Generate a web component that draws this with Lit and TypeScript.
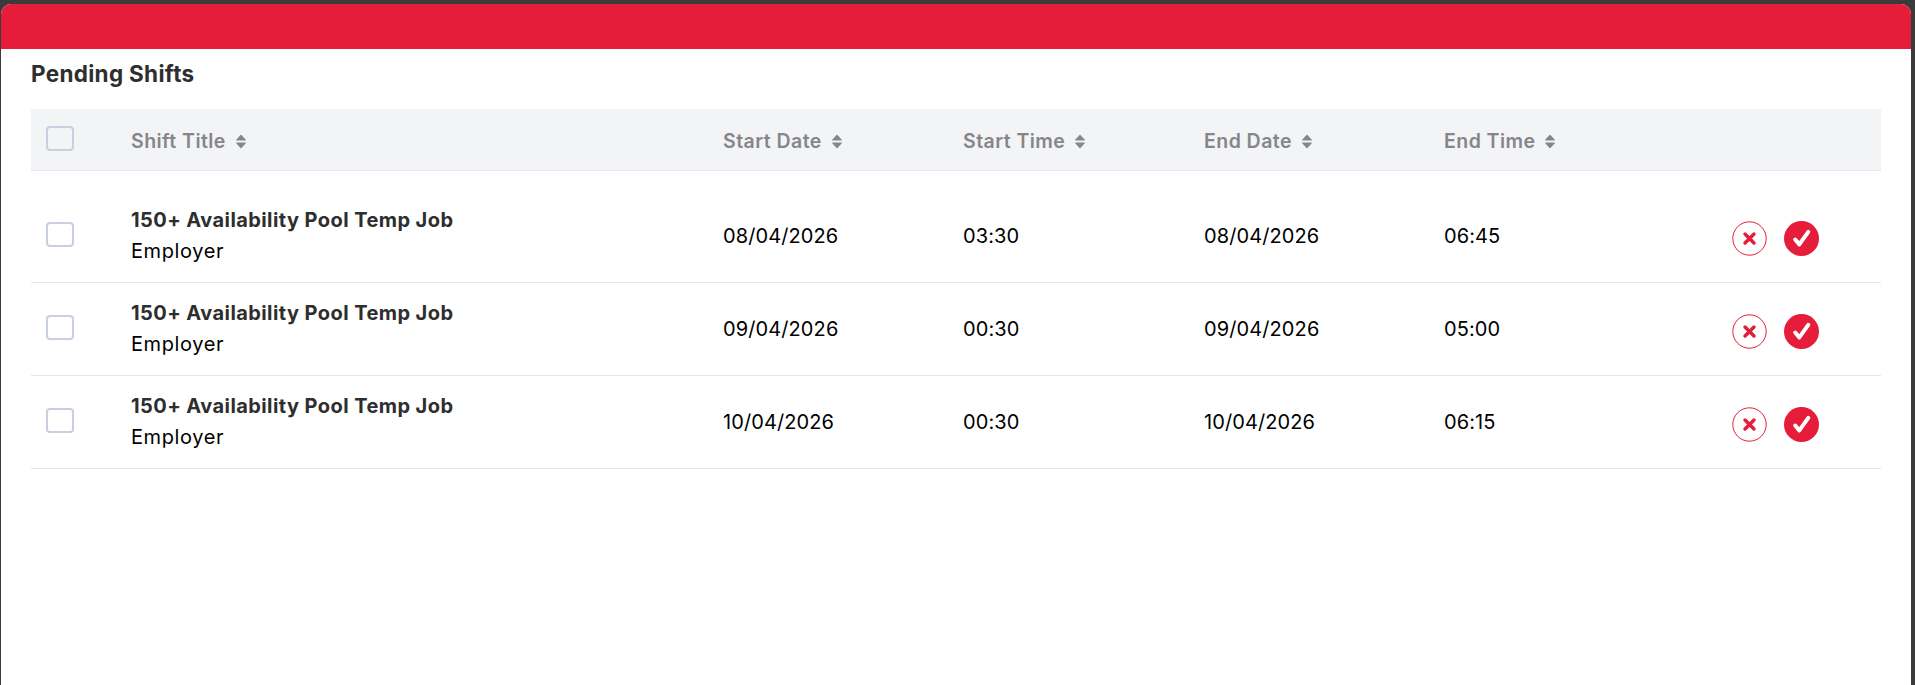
import { LitElement, html, css, svg } from "lit";
import { customElement } from "lit/decorators.js";

const rows = [
  { sd: "08/04/2026", st: "03:30", ed: "08/04/2026", et: "06:45" },
  { sd: "09/04/2026", st: "00:30", ed: "09/04/2026", et: "05:00" },
  { sd: "10/04/2026", st: "00:30", ed: "10/04/2026", et: "06:15" },
];
const cols = ["Shift Title", "Start Date", "Start Time", "End Date", "End Time"];

const sortIcon = svg`<svg class="sort" width="10" height="15" viewBox="0 0 10 15"><path d="M5 .5 9.6 5.6a.5.5 0 0 1-.4.9H.8a.5.5 0 0 1-.4-.9zM5 14.5.4 9.4a.5.5 0 0 1 .4-.9h8.4a.5.5 0 0 1 .4.9z" fill="#86868a"/></svg>`;

@customElement("app-root")
export class AppRoot extends LitElement {
  static styles = css`
    :host {
      display: block;
      height: 685px;
      overflow: hidden;
      background: #3b3b3b;
      padding: 4px 4px 0 1px;
      box-sizing: border-box;
      font-family: Inter, "Noto Sans", sans-serif;
      color: #000;
    }
    .panel {
      height: 681px;
      background: #fff;
      border-radius: 10px 10px 0 0;
      overflow: hidden;
    }
    .bar {
      height: 45px;
      background: #e51c3a;
    }
    .content {
      padding: 11px 30px 0 30px;
    }
    h2 {
      margin: 0;
      font-size: 22.5px;
      line-height: 27px;
      font-weight: 700;
      color: #2e2e2e;
      letter-spacing: 0.3px;
    }
    .grid {
      display: grid;
      grid-template-columns: 100px 592px 240px 241px 240px 1fr auto;
      align-items: center;
    }
    .head {
      margin-top: 22px;
      height: 62px;
      box-sizing: border-box;
      background: #f3f4f6;
      border-bottom: 1px solid #e4e5ea;
    }
    .th {
      display: flex;
      align-items: center;
      gap: 10px;
      padding-top: 3px;
      font-size: 19.5px;
      font-weight: 600;
      color: #86868a;
      letter-spacing: 0.45px;
    }
    .sort {
      display: block;
    }
    .box {
      display: block;
      width: 28px;
      height: 25px;
      box-sizing: border-box;
      margin-left: 15px;
      border: 2px solid #c7cfe0;
      border-radius: 4px;
      background: transparent;
    }
    .head .box {
      margin-top: -3px;
    }
    .body {
      padding-top: 19px;
    }
    .row {
      height: 93px;
      box-sizing: border-box;
      border-bottom: 1px solid #e6e6e6;
      font-size: 20px;
      letter-spacing: 0.1px;
    }
    .row .box {
      margin-top: -4px;
    }
    .title {
      font-weight: 700;
      color: #2e2e2e;
      line-height: 31px;
      letter-spacing: 0.42px;
    }
    .emp {
      line-height: 31px;
      letter-spacing: 0.6px;
    }
    .actions {
      display: flex;
      align-items: center;
      gap: 17px;
      padding-right: 62px;
      padding-top: 4px;
    }
    .actions svg {
      display: block;
    }
  `;

  render() {
    return html`
      <div class="panel">
        <div class="bar"></div>
        <div class="content">
          <h2>Pending Shifts</h2>
          <div class="grid head">
            <span class="box"></span>
            ${cols.map((c) => html`<div class="th">${c}${sortIcon}</div>`)}
            <div></div>
          </div>
          <div class="body">
            ${rows.map(
              (r) => html`
                <div class="grid row">
                  <span class="box"></span>
                  <div>
                    <div class="title">150+ Availability Pool Temp Job</div>
                    <div class="emp">Employer</div>
                  </div>
                  <div>${r.sd}</div>
                  <div>${r.st}</div>
                  <div>${r.ed}</div>
                  <div>${r.et}</div>
                  <div class="actions">
                    <svg width="35" height="35" viewBox="0 0 35 35">
                      <circle cx="17.5" cy="17.5" r="16.7" fill="#fff" stroke="#e51c3a" stroke-width="1"/>
                      <path d="M13 13 22 22M22 13 13 22" stroke="#e51c3a" stroke-width="3.4" stroke-linecap="round" fill="none"/>
                    </svg>
                    <svg width="35" height="35" viewBox="0 0 35 35">
                      <circle cx="17.5" cy="17.5" r="17.5" fill="#e51c3a"/>
                      <path d="M11.2 18.5 15.3 23.4 24.3 10.8" stroke="#fff" stroke-width="4" stroke-linecap="round" stroke-linejoin="round" fill="none"/>
                    </svg>
                  </div>
                </div>
              `
            )}
          </div>
        </div>
      </div>
    `;
  }
}
